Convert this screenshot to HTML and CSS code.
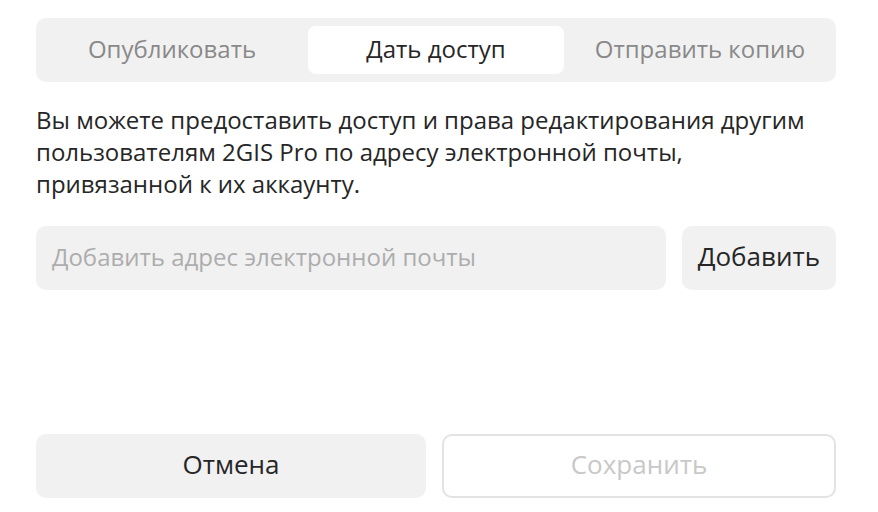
FILE: index.html
```html
<!DOCTYPE html>
<html lang="ru">
<head>
<meta charset="utf-8">
<link rel="stylesheet" href="styles.css">
</head>
<body>
<div class="page">
  <div class="tabs">
    <div class="tab">Опубликовать</div>
    <div class="tab active">Дать доступ</div>
    <div class="tab">Отправить копию</div>
  </div>
  <p class="desc">Вы можете предоставить доступ и права редактирования другим пользователям 2GIS Pro по адресу электронной почты, привязанной к их аккаунту.</p>
  <div class="add-row">
    <div class="input">Добавить адрес электронной почты</div>
    <div class="btn add">Добавить</div>
  </div>
  <div class="spacer"></div>
  <div class="actions">
    <div class="btn cancel">Отмена</div>
    <div class="btn save">Сохранить</div>
  </div>
</div>
</body>
</html>
```
FILE: styles.css
```css
* { box-sizing: border-box; }
html, body { margin: 0; background: #fff; }
body { font-family: "Open Sans", "Noto Sans", sans-serif; color: #262626; }
.page {
  width: 878px;
  height: 512px;
  padding: 18px 42px 14px 36px;
  display: flex;
  flex-direction: column;
}
.tabs {
  display: flex;
  gap: 8px;
  padding: 8px;
  background: #f1f1f1;
  border-radius: 10px;
  height: 64px;
}
.tab {
  flex: 1 1 0;
  min-width: 0;
  display: flex;
  align-items: center;
  justify-content: center;
  padding-bottom: 4px;
  border-radius: 8px;
  font-size: 24px;
  color: #898989;
}
.tab.active { background: #fff; color: #262626; }
.desc {
  margin: 22px 0 0;
  font-size: 24px;
  line-height: 32px;
  color: #262626;
}
.add-row {
  display: flex;
  gap: 16px;
  margin-top: 26px;
}
.input {
  flex: 1 1 0;
  min-width: 0;
  height: 64px;
  background: #f1f1f1;
  border-radius: 10px;
  display: flex;
  align-items: center;
  padding: 0 16px 4px;
  font-size: 24px;
  color: #adadad;
}
.btn {
  height: 64px;
  border-radius: 10px;
  display: flex;
  align-items: center;
  justify-content: center;
  padding-bottom: 4px;
  font-size: 26px;
}
.add { background: #f1f1f1; padding: 0 16px 4px; color: #262626; }
.spacer { flex: 1; }
.actions { display: flex; gap: 16px; }
.cancel, .save { flex: 1 1 0; min-width: 0; }
.cancel { background: #f1f1f1; color: #262626; }
.save { border: 2px solid #e3e3e3; color: #c8c8c8; background: #fff; }
```
